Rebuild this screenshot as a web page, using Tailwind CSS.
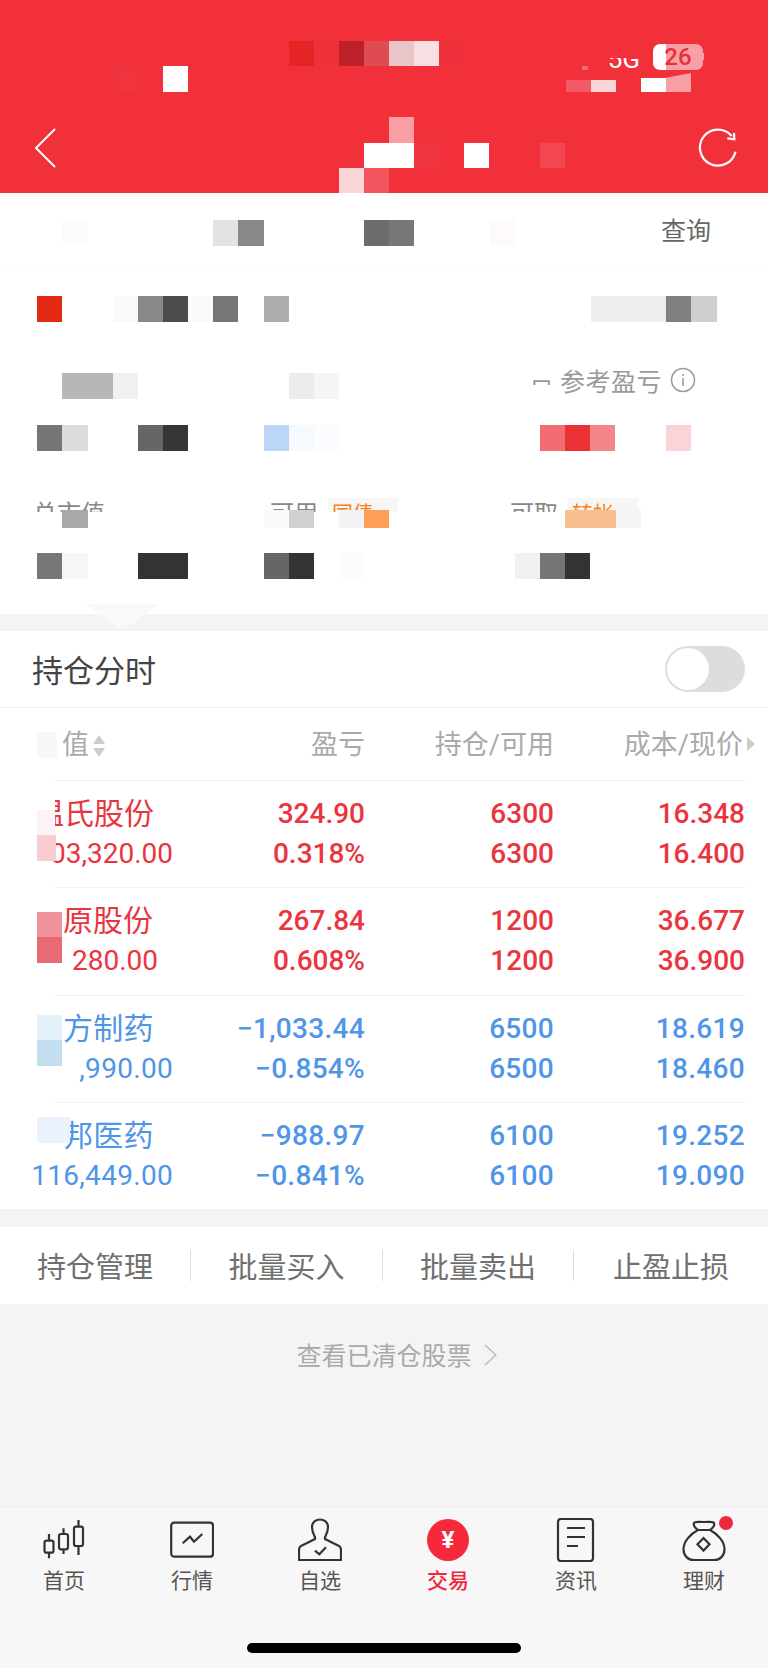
<!DOCTYPE html>
<html lang="zh-CN">
<head>
    <meta charset="UTF-8">
    <meta name="viewport" content="width=device-width, initial-scale=1.0">
    <title>持仓</title>
    <script src="https://cdn.jsdelivr.net/npm/@tailwindcss/browser@4"></script>
</head>
<body class="bg-[#f4f4f4] font-['Noto_Sans_CJK_SC','Noto_Sans',sans-serif]">
<div class="relative w-[768px] h-[1668px] overflow-hidden flex flex-col">

    <!-- red header -->
    <header class="h-[193px] shrink-0 bg-[#f1303a] text-white flex flex-col">
        <div class="h-[117px] pt-[44px] pr-[65px] flex justify-end items-start gap-[13px]">
            <span class="mt-[14px] h-[10px] overflow-hidden text-[26px] leading-[18px] font-['Roboto',sans-serif]"><b class="block -mt-[8px] font-normal">5G</b></span>
            <span class="w-[50px] h-[26px] rounded-[7px] bg-[linear-gradient(90deg,#fff_0,#fff_26%,#f9a0a6_26%)] text-center text-[24px] leading-[26px] font-medium text-[#e8303a] font-['Roboto',sans-serif]">26</span>
        </div>
        <div class="flex justify-between items-start pl-[34px] pr-[30px] pt-[11px]">
            <svg class="w-[24px] h-[40px]" viewBox="0 0 24 40" fill="none" stroke="#fff" stroke-width="2"><path d="M21 1 2 20 21 39"/></svg>
            <svg class="w-[42px] h-[40px]" viewBox="0 0 42 40" fill="none" stroke="#fff" stroke-width="2.2"><path d="M35.7 8A18 18 0 1 0 39.5 23.7"/><path d="M38 5 38.3 11.3 31.3 10.3"/></svg>
        </div>
    </header>

    <!-- account summary -->
    <section class="h-[421px] shrink-0 bg-white flex flex-col">
        <div class="h-[74px] pr-[57px] flex justify-end items-start pt-[20px] text-[25px] leading-[32px] text-[#666]">查询</div>
        <div class="h-[63px] border-t border-[#fafafa]"></div>
        <div class="h-[28px]"></div>
        <div class="h-[44px] pr-[72px] flex justify-end items-center gap-[8px] text-[25px] text-[#9a9a9a]">
            <span class="h-[10px] w-[25px] overflow-hidden leading-[28px]">日</span>
            <span class="-ml-[2px] leading-[28px] tracking-[0.5px]">参考盈亏</span>
            <svg class="w-[26px] h-[26px]" viewBox="0 0 26 26" fill="none" stroke="#999" stroke-width="1.5"><circle cx="13" cy="13" r="11.5"/><path d="M13 11v8M13 7v2"/></svg>
        </div>
        <div class="h-[96px]"></div>
        <div class="pl-[33px] grid grid-cols-[237px_240px_1fr] h-[14px] overflow-hidden text-[24px] leading-[28px] text-[#888]">
            <span>总市值</span>
            <span class="flex gap-[10px]">可用<em class="not-italic h-[14px] w-[70px] pl-[4px] bg-[#f6f6f6] text-[21px] text-[#f58220]">国债</em></span>
            <span class="flex gap-[10px]">可取<em class="not-italic h-[14px] w-[70px] pl-[4px] bg-[#f6f6f6] text-[21px] text-[#f58220]">转帐</em></span>
        </div>
    </section>

    <!-- holdings -->
    <section class="mt-[17px] bg-white shrink-0">
        <div class="h-[77px] border-b border-[#eee] pl-[32px] pr-[23px] flex items-center justify-between">
            <span class="text-[31px] text-[#444]">持仓分时</span>
            <span class="w-[80px] h-[46px] rounded-full bg-[#ddd] p-[2px] flex">
                <i class="w-[42px] h-[42px] rounded-full bg-white"></i>
            </span>
        </div>

        <div class="ml-[55px] w-[690px] font-['Roboto','Noto_Sans_CJK_SC',sans-serif]">
            <div class="h-[72px] pt-[3px] grid grid-cols-[118px_192px_189px_191px] items-center text-right text-[27px] text-[#aaa]">
                <span class="flex items-center gap-[3px] pl-[7px]">值
                    <svg class="w-[14px] h-[26px]" viewBox="0 0 14 26" fill="#ccc"><path d="M7 2 13 11H1Z"/><path d="M7 24 1 15H13Z"/></svg>
                </span>
                <span>盈亏</span>
                <span>持仓/可用</span>
                <span class="relative -left-[2px]">成本/现价<svg class="absolute -right-[12px] top-[12px] w-[8px] h-[14px]" viewBox="0 0 8 14" fill="#ccc"><path d="M0 0 8 7 0 14Z"/></svg></span>
            </div>

            <div class="h-[107px] border-t border-[#f1f1f1] pt-[13px] grid grid-cols-[118px_192px_189px_191px] text-right text-[28px] leading-[40px] font-medium text-[#ea3540]">
                <div class="text-left font-normal">
                    <div class="overflow-hidden whitespace-nowrap text-[30px]"><span class="inline-block -ml-[21px]">温氏股份</span></div>
                    <div class="flex justify-end whitespace-nowrap">03,320.00</div>
                </div>
                <div>324.90<br>0.318%</div>
                <div>6300<br>6300</div>
                <div>16.348<br>16.400</div>
            </div>
            <div class="h-[108px] border-t border-[#f1f1f1] pt-[13px] grid grid-cols-[118px_192px_189px_191px] text-right text-[28px] leading-[40px] font-medium text-[#ea3540]">
                <div class="text-left font-normal">
                    <div class="pl-[8px] whitespace-nowrap text-[30px]">原股份</div>
                    <div class="flex justify-end whitespace-nowrap pr-[15px]">280.00</div>
                </div>
                <div>267.84<br>0.608%</div>
                <div>1200<br>1200</div>
                <div>36.677<br>36.900</div>
            </div>
            <div class="h-[107px] border-t border-[#f1f1f1] pt-[13px] grid grid-cols-[118px_192px_189px_191px] text-right text-[28px] leading-[40px] font-medium tracking-[0.3px] text-[#4f95e8]">
                <div class="text-left font-normal">
                    <div class="pl-[8px] whitespace-nowrap text-[30px]">方制药</div>
                    <div class="flex justify-end whitespace-nowrap">,990.00</div>
                </div>
                <div>−1,033.44<br>−0.854%</div>
                <div>6500<br>6500</div>
                <div>18.619<br>18.460</div>
            </div>
            <div class="h-[107px] border-t border-[#f1f1f1] pt-[13px] grid grid-cols-[118px_192px_189px_191px] text-right text-[28px] leading-[40px] font-medium tracking-[0.3px] text-[#4f95e8]">
                <div class="text-left font-normal">
                    <div class="pl-[8px] whitespace-nowrap text-[30px]">邦医药</div>
                    <div class="flex justify-end whitespace-nowrap">116,449.00</div>
                </div>
                <div>−988.97<br>−0.841%</div>
                <div>6100<br>6100</div>
                <div>19.252<br>19.090</div>
            </div>
        </div>
    </section>

    <!-- actions -->
    <nav class="mt-[18px] h-[77px] shrink-0 bg-white flex items-center text-center text-[29px] text-[#707070]">
        <span class="w-[191px] h-[31px] leading-[31px] border-r border-[#ddd]">持仓管理</span>
        <span class="w-[192px] h-[31px] leading-[31px] border-r border-[#ddd]">批量买入</span>
        <span class="w-[191px] h-[31px] leading-[31px] border-r border-[#ddd]">批量卖出</span>
        <span class="w-[194px] h-[31px] leading-[31px]">止盈止损</span>
    </nav>

    <div class="h-[203px] shrink-0 pt-[30px] pl-[25px] flex justify-center items-start gap-[12px] text-[25px] leading-[40px] text-[#aaa]">
        <span>查看已清仓股票</span>
        <svg class="mt-[10px] w-[13px] h-[22px]" viewBox="0 0 13 22" fill="none" stroke="#bbb" stroke-width="1.5"><path d="M1 1 12 11 1 21"/></svg>
    </div>

    <!-- tab bar -->
    <footer class="relative flex-1 bg-[#f7f7f7] border-t border-[#eee]">
        <div class="grid grid-cols-6 pt-[10px] text-center text-[21px] leading-[28px] text-[#555]">
            <div class="flex flex-col items-center gap-[3px]">
                <svg class="w-[44px] h-[44px]" viewBox="0 0 44 44" fill="none" stroke="#333" stroke-width="2.2"><rect x="2.5" y="22.7" width="9" height="12" rx="2"/><path d="M7 16v6.7M7 34.7V40.3"/><rect x="17" y="16" width="9" height="15.3" rx="2"/><path d="M21.5 10.3V16M21.5 31.3V36"/><rect x="32" y="8.7" width="9" height="19.3" rx="2"/><path d="M36.5 2v6.7M36.5 28V37"/></svg>
                <span>首页</span>
            </div>
            <div class="flex flex-col items-center gap-[3px]">
                <svg class="w-[44px] h-[44px]" viewBox="0 0 44 44" fill="none" stroke="#333" stroke-width="2.2"><rect x="1.2" y="4.7" width="41.8" height="34" rx="3"/><path d="M12.7 25.3 20 18.7 24 23.7 32.3 16"/></svg>
                <span>行情</span>
            </div>
            <div class="flex flex-col items-center gap-[3px]">
                <svg class="w-[44px] h-[44px]" viewBox="0 0 44 44" fill="none" stroke="#333" stroke-width="2.2"><path d="M14 9C14 4 18 1.5 22 1.5S30 4 30 9C30 14 28 17 27 19V21L41 28C43 29 43 30 43 32V42H1V32C1 30 1 29 3 28L17 21V19C16 17 14 14 14 9Z"/><path d="M17 32.7 21.3 36.3 28 29.3"/></svg>
                <span>自选</span>
            </div>
            <div class="flex flex-col items-center gap-[3px] text-[#f0283c] font-medium">
                <span class="my-[1px] w-[42px] h-[42px] rounded-full bg-[#f5283c] text-white text-[24px] leading-[42px] font-bold font-['Roboto',sans-serif]">¥</span>
                <span>交易</span>
            </div>
            <div class="flex flex-col items-center gap-[3px]">
                <svg class="w-[44px] h-[44px]" viewBox="0 0 44 44" fill="none" stroke="#333" stroke-width="2.2"><rect x="4" y="1" width="35" height="42" rx="3"/><path d="M13 10H31M13 19H31M13 28H24"/></svg>
                <span>资讯</span>
            </div>
            <div class="flex flex-col items-center gap-[3px]">
                <span class="relative w-[44px] h-[44px]">
                    <svg class="w-[44px] h-[44px]" viewBox="0 0 44 44" fill="none" stroke="#333" stroke-width="2.2"><path d="M16 12C8 16 1.5 24 1.5 31C1.5 38 6 42 12 42H32C38 42 42.5 38 42.5 31C42.5 24 36 16 28 12"/><path d="M16 12H28C31 10 33 8 32 5C31 3 28 4 22 4S13 3 12 5C11 8 13 10 16 12Z"/><path d="M21.5 20 27.5 26.3 21.5 32.6 15.5 26.3Z"/></svg>
                    <i class="absolute left-[37px] -top-[2px] w-[14px] h-[14px] rounded-full bg-[#f0283c]"></i>
                </span>
                <span>理财</span>
            </div>
        </div>
        <div class="mt-[50px] mx-auto w-[274px] h-[10px] rounded-full bg-black"></div>
    </footer>

    <!-- mosaic over the private figures -->
    <div class="absolute inset-0 pointer-events-none">
        <i class="absolute left-[289px] top-[41px] w-[25px] h-[25px] bg-[#e52525]"></i>
        <i class="absolute left-[314px] top-[41px] w-[25px] h-[25px] bg-[#ee3038]"></i>
        <i class="absolute left-[339px] top-[41px] w-[25px] h-[25px] bg-[#bd2028]"></i>
        <i class="absolute left-[364px] top-[41px] w-[25px] h-[25px] bg-[#e04a52]"></i>
        <i class="absolute left-[389px] top-[41px] w-[25px] h-[25px] bg-[#e8c5c8]"></i>
        <i class="absolute left-[414px] top-[41px] w-[25px] h-[25px] bg-[#f7dfe2]"></i>
        <i class="absolute left-[439px] top-[41px] w-[25px] h-[25px] bg-[#ef2f3a]"></i>
        <i class="absolute left-[113px] top-[66px] w-[25px] h-[26px] bg-[#f0343d]"></i>
        <i class="absolute left-[163px] top-[66px] w-[25px] h-[26px] bg-white"></i>
        <i class="absolute left-[582px] top-[66px] w-[6px] h-[4px] bg-[#f76a72]"></i>
        <i class="absolute left-[566px] top-[80px] w-[25px] h-[12px] bg-[#f35a63]"></i>
        <i class="absolute left-[591px] top-[80px] w-[25px] h-[12px] bg-[#fbd6d9]"></i>
        <i class="absolute left-[641px] top-[78px] w-[25px] h-[14px] bg-white"></i>
        <i class="absolute left-[666px] top-[73px] w-[25px] h-[19px] bg-[#f99ea4] [clip-path:polygon(0_25%,100%_0,100%_100%,0_100%)]"></i>
        <i class="absolute left-[701px] top-[53px] w-[3px] h-[7px] bg-[#f99ea4]"></i>
        <i class="absolute left-[389px] top-[117px] w-[25px] h-[26px] bg-[#f99ea5]"></i>
        <i class="absolute left-[364px] top-[143px] w-[50px] h-[25px] bg-white"></i>
        <i class="absolute left-[414px] top-[143px] w-[25px] h-[25px] bg-[#f13540]"></i>
        <i class="absolute left-[464px] top-[143px] w-[25px] h-[25px] bg-white"></i>
        <i class="absolute left-[540px] top-[143px] w-[25px] h-[25px] bg-[#f34650]"></i>
        <i class="absolute left-[339px] top-[168px] w-[25px] h-[25px] bg-[#fbd6d9]"></i>
        <i class="absolute left-[364px] top-[168px] w-[25px] h-[25px] bg-[#f3545d]"></i>

        <i class="absolute left-[62px] top-[220px] w-[26px] h-[26px] bg-[#fcfcfc]"></i>
        <i class="absolute left-[213px] top-[220px] w-[25px] h-[26px] bg-[#e3e3e3]"></i>
        <i class="absolute left-[238px] top-[220px] w-[26px] h-[26px] bg-[#888]"></i>
        <i class="absolute left-[364px] top-[220px] w-[25px] h-[26px] bg-[#6c6c6c]"></i>
        <i class="absolute left-[389px] top-[220px] w-[25px] h-[26px] bg-[#787878]"></i>
        <i class="absolute left-[490px] top-[220px] w-[25px] h-[26px] bg-[#fefafa]"></i>

        <i class="absolute left-[37px] top-[296px] w-[25px] h-[26px] bg-[#e32b14]"></i>
        <i class="absolute left-[113px] top-[296px] w-[25px] h-[26px] bg-[#fafafa]"></i>
        <i class="absolute left-[138px] top-[296px] w-[25px] h-[26px] bg-[#888]"></i>
        <i class="absolute left-[163px] top-[296px] w-[25px] h-[26px] bg-[#4c4c4c]"></i>
        <i class="absolute left-[188px] top-[296px] w-[25px] h-[26px] bg-[#fafafa]"></i>
        <i class="absolute left-[213px] top-[296px] w-[25px] h-[26px] bg-[#777]"></i>
        <i class="absolute left-[264px] top-[296px] w-[25px] h-[26px] bg-[#adadad]"></i>
        <i class="absolute left-[591px] top-[296px] w-[75px] h-[26px] bg-[#eee]"></i>
        <i class="absolute left-[666px] top-[296px] w-[25px] h-[26px] bg-[#808080]"></i>
        <i class="absolute left-[691px] top-[296px] w-[26px] h-[26px] bg-[#cfcfcf]"></i>

        <i class="absolute left-[62px] top-[373px] w-[51px] h-[26px] bg-[#b7b7b7]"></i>
        <i class="absolute left-[113px] top-[373px] w-[25px] h-[26px] bg-[#f0f0f0]"></i>
        <i class="absolute left-[289px] top-[373px] w-[25px] h-[26px] bg-[#ececec]"></i>
        <i class="absolute left-[314px] top-[373px] w-[25px] h-[26px] bg-[#f5f5f5]"></i>

        <i class="absolute left-[37px] top-[425px] w-[25px] h-[26px] bg-[#757575]"></i>
        <i class="absolute left-[62px] top-[425px] w-[26px] h-[26px] bg-[#ddd]"></i>
        <i class="absolute left-[138px] top-[425px] w-[25px] h-[26px] bg-[#666]"></i>
        <i class="absolute left-[163px] top-[425px] w-[25px] h-[26px] bg-[#363636]"></i>
        <i class="absolute left-[264px] top-[425px] w-[25px] h-[26px] bg-[#bcd6f8]"></i>
        <i class="absolute left-[289px] top-[425px] w-[25px] h-[26px] bg-[#f6f9fe]"></i>
        <i class="absolute left-[314px] top-[425px] w-[25px] h-[26px] bg-[#fbfcff]"></i>
        <i class="absolute left-[540px] top-[425px] w-[25px] h-[26px] bg-[#f26c72]"></i>
        <i class="absolute left-[565px] top-[425px] w-[25px] h-[26px] bg-[#ea3135]"></i>
        <i class="absolute left-[590px] top-[425px] w-[25px] h-[26px] bg-[#f48589]"></i>
        <i class="absolute left-[666px] top-[425px] w-[25px] h-[26px] bg-[#fcd3d7]"></i>

        <i class="absolute left-[62px] top-[510px] w-[26px] h-[18px] bg-[#a8a8a8]"></i>
        <i class="absolute left-[264px] top-[510px] w-[25px] h-[18px] bg-[#fafafa]"></i>
        <i class="absolute left-[289px] top-[510px] w-[25px] h-[18px] bg-[#d0d0d0]"></i>
        <i class="absolute left-[339px] top-[510px] w-[25px] h-[18px] bg-[#f3f3f5]"></i>
        <i class="absolute left-[364px] top-[510px] w-[25px] h-[18px] bg-[#fe9f55]"></i>
        <i class="absolute left-[565px] top-[510px] w-[51px] h-[18px] bg-[#f8c08e]"></i>
        <i class="absolute left-[616px] top-[510px] w-[25px] h-[18px] bg-[#f4f4f4]"></i>

        <i class="absolute left-[37px] top-[553px] w-[25px] h-[26px] bg-[#777]"></i>
        <i class="absolute left-[62px] top-[553px] w-[26px] h-[26px] bg-[#f6f6f6]"></i>
        <i class="absolute left-[138px] top-[553px] w-[50px] h-[26px] bg-[#333]"></i>
        <i class="absolute left-[264px] top-[553px] w-[25px] h-[26px] bg-[#666]"></i>
        <i class="absolute left-[289px] top-[553px] w-[25px] h-[26px] bg-[#333]"></i>
        <i class="absolute left-[339px] top-[553px] w-[25px] h-[26px] bg-[#fcfcfc]"></i>
        <i class="absolute left-[515px] top-[553px] w-[25px] h-[26px] bg-[#f1f1f1]"></i>
        <i class="absolute left-[540px] top-[553px] w-[25px] h-[26px] bg-[#757575]"></i>
        <i class="absolute left-[565px] top-[553px] w-[25px] h-[26px] bg-[#333]"></i>

        <i class="absolute left-[85px] top-[604px] w-[75px] h-[26px] bg-[#f9f9f9] [clip-path:polygon(0_0,100%_0,50%_100%)]"></i>

        <i class="absolute left-[37px] top-[732px] w-[20px] h-[26px] bg-[#f8f8f8]"></i>
        <i class="absolute left-[37px] top-[810px] w-[18px] h-[25px] bg-[#fef3f4]"></i>
        <i class="absolute left-[37px] top-[835px] w-[19px] h-[26px] bg-[#f9cdd0]"></i>
        <i class="absolute left-[37px] top-[912px] w-[25px] h-[25px] bg-[#f0939b]"></i>
        <i class="absolute left-[37px] top-[937px] w-[25px] h-[26px] bg-[#e96a72]"></i>
        <i class="absolute left-[37px] top-[1015px] w-[25px] h-[25px] bg-[#e3f1fb]"></i>
        <i class="absolute left-[37px] top-[1040px] w-[25px] h-[26px] bg-[#c3deee]"></i>
        <i class="absolute left-[37px] top-[1117px] w-[33px] h-[26px] bg-[#eaf3fd]"></i>
    </div>
</div>
</body>
</html>
